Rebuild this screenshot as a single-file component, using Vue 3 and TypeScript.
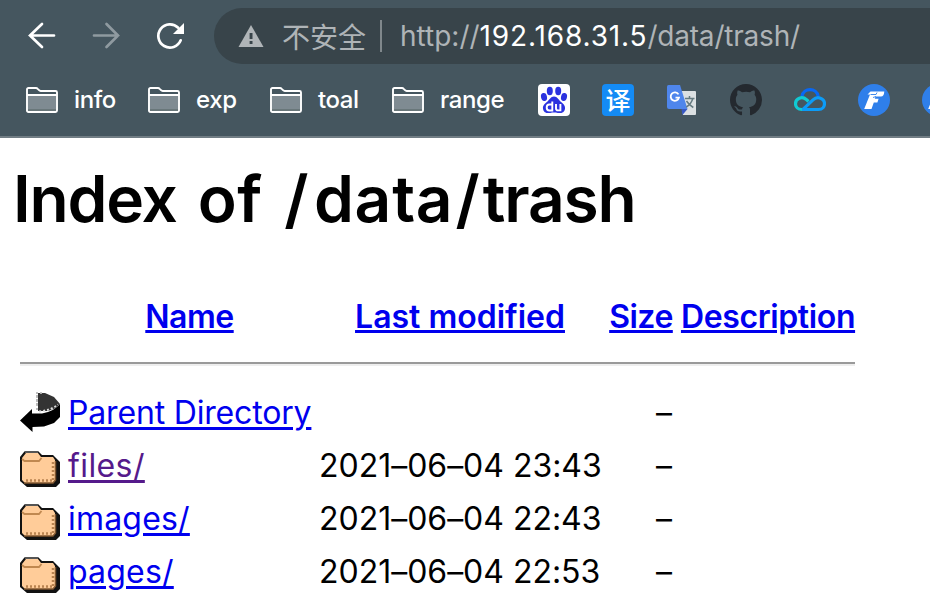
<script setup lang="ts">
interface Folder {
  label: string
  wide?: boolean
}
interface Entry {
  name: string
  modified: string
  size: string
  icon: 'back' | 'folder'
  kind: string
}

const folders: Folder[] = [
  { label: 'info' },
  { label: 'exp' },
  { label: 'toal' },
  { label: 'range', wide: true },
]

const entries: Entry[] = [
  { name: 'Parent Directory', modified: '', size: '–', icon: 'back', kind: 'parent' },
  { name: 'files/', modified: '2021–06–04 23:43', size: '–', icon: 'folder', kind: 'visited' },
  { name: 'images/', modified: '2021–06–04 22:43', size: '–', icon: 'folder', kind: 'plain' },
  { name: 'pages/', modified: '2021–06–04 22:53', size: '–', icon: 'folder', kind: 'plain' },
]
</script>

<template>
  <div class="window">
    <header class="chrome">
      <div class="toolbar">
        <svg class="nav" viewBox="0 0 32 32"><path d="M28 15.500H4M16 4 4 15.500 16 27" /></svg>
        <svg class="nav dim" viewBox="0 0 32 32"><path d="M4 15.500H28M16.500 4 28 15.500 16.500 27" /></svg>
        <svg class="nav reload" viewBox="0 0 32 32">
          <path d="M26.700 20.300A11.600 11.600 0 1 1 24.200 7.800" />
          <path class="tip" d="M30 3V14H19Z" />
        </svg>
        <div class="omnibox">
          <svg class="warn" viewBox="0 0 26 24">
            <path d="M13 1 25.500 23H.5Z" fill="#b0b5b8" />
            <path d="M11.600 9h2.900v6h-2.900zM11.600 17h2.900v3h-2.900z" fill="#38444a" />
          </svg>
          <span class="insecure">不安全</span>
          <span class="divider"></span>
          <span class="url"><span class="scheme">http://</span><span class="host">192.168.31.5</span><span class="path">/data/trash/</span></span>
        </div>
      </div>
      <nav class="bookmarks">
        <div v-for="f in folders" :key="f.label" class="bookmark">
          <svg class="bm-folder" viewBox="0 0 32 26">
            <path d="M2 8h28v16H2z" fill="#7f8b92" />
            <path d="M2 22h28v2H2z" fill="#69777a" />
            <path d="M1 24V2.500Q1 1 2.500 1H10q1 0 1.700.8L13 3.200q.7.800 1.700.8H29.500Q31 4 31 5.500V23.500Q31 25 29.500 25H2.500Q1 25 1 23.500M1 8H31" fill="none" stroke="#fff" stroke-width="1.900" />
          </svg>
          <span class="bm-label" :class="{ wide: f.wide }">{{ f.label }}</span>
        </div>
        <div class="favicons">
          <svg viewBox="0 0 32 32">
            <rect width="32" height="32" rx="4" fill="#fff" />
            <g fill="#2b32df">
              <ellipse cx="11.800" cy="7" rx="3" ry="4.200" />
              <ellipse cx="20.200" cy="7" rx="3" ry="4.200" />
              <ellipse cx="6" cy="13" rx="3" ry="4" transform="rotate(-12 6 13)" />
              <ellipse cx="26" cy="13" rx="3" ry="4" transform="rotate(12 26 13)" />
              <path d="M16 12.500c3.500 0 4.500 3.300 6.800 5.200 2.500 2 4.600 3.800 4.200 7-.5 4-4 4.800-7.300 4.200-2.400-.4-5-.4-7.400 0C9 29.500 5.500 28.700 5 24.700c-.4-3.200 1.700-5 4.200-7 2.300-1.900 3.300-5.200 6.800-5.200z" />
            </g>
            <path d="M14.300 17.500v9h-3q-2.600 0-2.600-3t2.600-3h3M18 20v4.200q0 2.200 2 2.200h2.400V20" fill="none" stroke="#fff" stroke-width="1.900" />
          </svg>
          <span class="translate">译</span>
          <svg viewBox="0 0 32 32">
            <path d="M13 7h16q1 0 1 1v22q0 1-1 1H17z" fill="#dce0e2" />
            <path d="M15.500 25h6l-5 6z" fill="#3757c4" />
            <path d="M1 2.500Q1 1 2.500 1H14l7.500 24H3q-2 0-2-2z" fill="#4f86ec" />
            <path d="M12.500 10.400A4.200 4.200 0 1 0 13 13.600H9.500" fill="none" stroke="#fff" stroke-width="1.800" />
            <path d="M19 14.500h9.500M23.500 12v2.500M26.800 14.500q-1.500 5.500-6.500 8.500M20.500 17q2.500 4 6.800 6.500" fill="none" stroke="#657a80" stroke-width="1.500" />
          </svg>
          <svg viewBox="0 0 16 16">
            <path fill="#24292f" d="M8 0C3.580 0 0 3.580 0 8c0 3.540 2.290 6.530 5.470 7.590.4.070.55-.17.55-.38 0-.19-.01-.82-.01-1.490-2.010.37-2.530-.49-2.690-.94-.09-.23-.48-.94-.82-1.130-.28-.15-.68-.52-.01-.53.63-.01 1.080.58 1.230.82.72 1.210 1.870.87 2.330.66.07-.52.28-.87.51-1.070-1.780-.2-3.640-.89-3.640-3.950 0-.87.31-1.590.82-2.150-.08-.2-.36-1.020.08-2.120 0 0 .67-.21 2.200.82.64-.18 1.320-.27 2-.27s1.360.09 2 .27c1.530-1.040 2.200-.82 2.200-.82.44 1.100.16 1.920.08 2.120.51.56.82 1.270.82 2.150 0 3.070-1.870 3.750-3.650 3.950.29.25.54.73.54 1.480 0 1.070-.01 1.930-.01 2.200 0 .21.15.46.55.38A8.010 8.010 0 0 0 16 8c0-4.420-3.580-8-8-8z" />
          </svg>
          <svg viewBox="0 0 32 32" fill="none" stroke-width="3.200">
            <path d="M8 12.200C9.500 3.500 22.500 3.500 24.200 12.200" stroke="#0868f5" />
            <path d="M14.500 17.500 12.500 15.600C8 11.500 1.500 14.500 1.500 19.700c0 3.300 2.500 5.800 6.500 5.800" stroke="#10cad4" />
            <path d="M8 25.500H24.500c4 0 6-2.700 6-5.800 0-5.500-7-8-11.500-3.800L9 25.300" stroke="#0c9cf8" />
          </svg>
          <svg v-for="n in 2" :key="n" viewBox="0 0 32 32">
            <circle cx="16" cy="16" r="16" fill="#2f7fea" />
            <path d="M12.500 7.500h13.800q-.3 5-3.300 5h-5.400l-.8 2.300h3.800l-1.200 3.700h-3.600L13.500 25H6.200L12 10.500H9.500z" fill="#fff" />
            <path d="M12.500 10.500h5.500l1-2M15 13.500l3-1" fill="none" stroke="#2f7fea" stroke-width=".9" />
          </svg>
        </div>
      </nav>
    </header>

    <main class="page">
      <h1><span class="t1">Index </span><span class="t2">of </span><span class="slash">/</span><span class="t3">data</span><span class="slash second">/</span><span class="t4">trash</span></h1>
      <div class="row head">
        <span></span>
        <a class="h-name">Name</a>
        <a class="h-mod">Last modified</a>
        <a class="h-size">Size</a>
        <a class="h-desc">Description</a>
      </div>
      <div class="rule"></div>
      <div v-for="e in entries" :key="e.name" class="row">
        <svg v-if="e.icon === 'back'" class="icon back" viewBox="0 0 40 44">
          <path d="M18 5h7l9 4 6 7-4 4-8 3H18z" fill="#333" />
          <path d="M17 4v18M21 4v2M16 8h3M16 12h3M16 16h3" stroke="#bbb" stroke-width="1.800" stroke-dasharray="2 2" />
          <path d="M40 16v13l-6 6-10 3.500-11.500.5V44L0 32.500 12 21v4.500H22q12-2 18-9.500z" fill="#000" />
          <path d="M19 23.500q12-1 19-7" stroke="#ddd" stroke-width="2" stroke-dasharray="2 2" fill="none" />
        </svg>
        <svg v-else class="icon" viewBox="0 0 40 44">
          <path d="M4 4 5 3H18l4 4H33l7 7V35l-4 4H7l-7-6V9z" fill="#111" />
          <path d="M2 10 6 5H18l3 4H33l2 3V33l-2 2H5l-3-3z" fill="#fc9" />
          <path d="M2 11 4.500 13H19l2.500-3" fill="none" stroke="#c08850" stroke-width="1.800" />
          <path d="M6 32.500H33M33 14V33" stroke="#b98350" stroke-width="2.500" stroke-dasharray="2 2" fill="none" />
          <path d="M4 35H33L35.500 32V13" stroke="#80562f" stroke-width="1.500" fill="none" />
          <path d="M5 4H18" stroke="#555" stroke-width="2" />
        </svg>
        <span><a :class="e.kind">{{ e.name }}</a></span>
        <span class="date">{{ e.modified }}</span>
        <span class="size">{{ e.size }}</span>
        <span></span>
      </div>
    </main>
  </div>
</template>

<style>
body {
  margin: 0;
  background: #fff;
  overflow: hidden;
}
</style>

<style scoped>
.window {
  width: 930px;
  height: 614px;
  overflow: hidden;
  font-family: Inter, "Noto Sans CJK SC", sans-serif;
}
.chrome {
  box-sizing: border-box;
  height: 138px;
  background: #45565f;
  border-bottom: 2px solid #717d84;
  overflow: hidden;
}
.toolbar {
  display: flex;
  align-items: center;
  height: 56px;
  padding: 8px 0 0 26px;
}
.nav {
  flex: none;
  width: 32px;
  height: 32px;
  margin-right: 32px;
  fill: none;
  stroke: #fff;
  stroke-width: 2.7;
  stroke-linecap: round;
}
.nav.dim {
  stroke: #8f9aa0;
}
.nav.reload {
  margin-right: 28px;
}
.nav .tip {
  fill: #fff;
  stroke: none;
}
.omnibox {
  flex: 1;
  display: flex;
  align-items: center;
  box-sizing: border-box;
  height: 56px;
  padding-left: 24px;
  background: #38444a;
  border-radius: 28px 0 0 28px;
  font-size: 28px;
  line-height: 56px;
  color: #afb4b7;
  white-space: nowrap;
}
.warn {
  flex: none;
  width: 26px;
  height: 24px;
}
.insecure {
  flex: none;
  width: 84px;
  margin-left: 18px;
  font-family: "Noto Sans CJK SC", sans-serif;
  line-height: 54px;
}
.divider {
  width: 2px;
  height: 32px;
  margin: 0 18px 0 14px;
  background: #80888c;
  flex: none;
}
.host {
  color: #fff;
  letter-spacing: 0.85px;
}
.path {
  letter-spacing: -0.2px;
}
.bookmarks {
  display: flex;
  align-items: center;
  gap: 32px;
  height: 72px;
  padding-left: 26px;
  font-size: 24px;
  color: #fff;
}
.bookmark {
  flex: none;
  display: flex;
  align-items: center;
  gap: 16px;
}
.bm-folder {
  width: 32px;
  height: 26px;
  margin-top: -1px;
}
.bm-label {
  width: 42px;
  font-weight: 500;
  letter-spacing: -0.4px;
  white-space: nowrap;
  margin-top: -2px;
}
.bm-label.wide {
  width: 66px;
}
.favicons {
  display: flex;
  gap: 32px;
}
.favicons > * {
  flex: none;
  width: 32px;
  height: 32px;
}
.translate {
  border-radius: 4px;
  background: #148bf5;
  color: #fff;
  font: 500 25px/31px "Noto Sans CJK SC", sans-serif;
  text-align: center;
}
.page {
  padding: 23px 16px 0;
}
h1 {
  margin: 0 0 53px;
  font-size: 64px;
  line-height: 76px;
  font-weight: 600;
  white-space: nowrap;
}
.t1 {
  margin-left: -3px;
  letter-spacing: -1.2px;
}
.t2 {
  margin-left: 6px;
  letter-spacing: 0.5px;
}
.slash {
  margin-left: 5px;
  letter-spacing: 5.5px;
}
.slash.second {
  margin-left: 2px;
  letter-spacing: 3px;
}
.t3 {
  letter-spacing: 0.8px;
}
.t4 {
  letter-spacing: -1.1px;
}
.row {
  display: grid;
  grid-template-columns: 40px 243px 282px 64px 174px;
  column-gap: 8px;
  height: 53px;
  padding-left: 4px;
  font-size: 32px;
  line-height: 53px;
  white-space: nowrap;
}
.head {
  font-weight: 600;
  justify-items: center;
}
.h-name,
.h-size {
  letter-spacing: -0.5px;
}
.h-desc {
  letter-spacing: -0.38px;
}
a {
  color: #00e;
  text-decoration: underline;
  text-decoration-thickness: 3px;
  text-underline-offset: 3px;
}
.head a {
  text-underline-offset: 2px;
}
.parent {
  letter-spacing: -0.17px;
}
a.visited {
  color: #551a8b;
  letter-spacing: 0.4px;
}
.plain {
  letter-spacing: 0.2px;
}
.rule {
  width: 835px;
  height: 2px;
  margin: 19px 0 20px 4px;
  background: #9a9a9a;
  border-bottom: 2px solid #eee;
}
.icon {
  width: 40px;
  height: 44px;
  margin-top: 9px;
}
.icon.back {
  margin-top: 2px;
}
.date {
  letter-spacing: -0.02px;
}
.size {
  text-align: right;
  padding-right: 1px;
}
</style>
